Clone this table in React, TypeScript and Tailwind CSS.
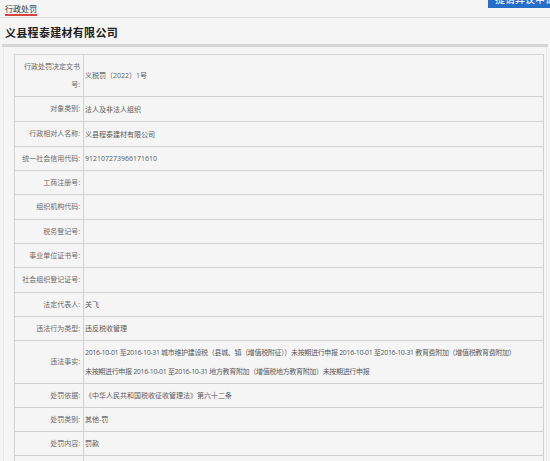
import { memo } from 'react'

interface Row {
  label: React.ReactNode
  value?: React.ReactNode
  h: string
}

const rows: Row[] = [
  { label: <>行政处罚决定文书<br />号:</>, value: '义税罚〔2022〕1号', h: 'h-[42px]' },
  { label: '对象类别:', value: '法人及非法人组织', h: 'h-[25px]' },
  { label: '行政相对人名称:', value: '义县程泰建材有限公司', h: 'h-[25px]' },
  { label: '统一社会信用代码:', value: '912107273966171610', h: 'h-[24px]' },
  { label: '工商注册号:', h: 'h-[24px]' },
  { label: '组织机构代码:', h: 'h-[25px]' },
  { label: '税务登记号:', h: 'h-[24px]' },
  { label: '事业单位证书号:', h: 'h-[24px]' },
  { label: '社会组织登记证号:', h: 'h-[25px]' },
  { label: '法定代表人:', value: '关飞', h: 'h-[24px]' },
  { label: '违法行为类型:', value: '违反税收管理', h: 'h-[24px]' },
  {
    label: '违法事实:',
    value: (
      <span className="tracking-[-0.33px]">
        2016-10-01 至2016-10-31 城市维护建设税（县城、镇（增值税附征））未按期进行申报 2016-10-01 至2016-10-31 教育费附加（增值税教育费附加）
        <br />
        未按期进行申报 2016-10-01 至2016-10-31 地方教育附加（增值税地方教育附加）未按期进行申报
      </span>
    ),
    h: 'h-[43px]',
  },
  { label: '处罚依据:', value: '《中华人民共和国税收征收管理法》第六十二条', h: 'h-[24px]' },
  { label: '处罚类别:', value: '其他-罚', h: 'h-[24px]' },
  { label: '处罚内容:', value: '罚款', h: 'h-[24px]' },
  { label: '', h: 'h-[24px]' },
]

const font = { fontFamily: '"Open Sans", "Noto Sans CJK SC", sans-serif' }

const InfoRow = memo(function InfoRow({ row }: { row: Row }) {
  return (
    <div className={`flex border-b border-[#d2d2d2] ${row.h}`}>
      <div className="flex w-[69px] shrink-0 items-center justify-end border-r border-[#d2d2d2] pr-[3px] text-right leading-[18px] text-[#6a6a6a]">
        <span>{row.label}</span>
      </div>
      <div className="flex flex-1 items-center whitespace-nowrap pl-[1px] leading-[19px] text-[#5a5a5a]">
        <span>{row.value}</span>
      </div>
    </div>
  )
})

export default function App() {
  return (
    <div className="h-[461px] w-[550px] overflow-hidden bg-[#f5f5f5]" style={font}>
      <div className="flex h-[18px] items-start justify-between border-b border-[#dcdcdc]">
        <span className="ml-[5px] mt-[3px] border-b-2 border-[#d8453b] text-[8px] leading-[11px] text-[#333]">
          行政处罚
        </span>
        <span className="-mt-[9px] flex h-[17px] w-[62px] items-center bg-[#256ec8] pl-[7px] text-[10px] whitespace-nowrap text-white">
          提请异议申请
        </span>
      </div>
      <div className="mx-[2px] flex h-[29px] items-center border-b-[3px] border-[#d6d6d6] pl-[3px] pt-[5px] text-[11px] font-bold tracking-[0.3px] text-[#222]">
        义县程泰建材有限公司
      </div>
      <div className="mx-[3px] border-x border-[#e9e9e9] pt-[7px]">
        <div className="ml-[10px] mr-[2px] border-x border-t border-[#d2d2d2] text-[7px]">
          {rows.map((row, i) => (
            <InfoRow key={i} row={row} />
          ))}
        </div>
      </div>
    </div>
  )
}
